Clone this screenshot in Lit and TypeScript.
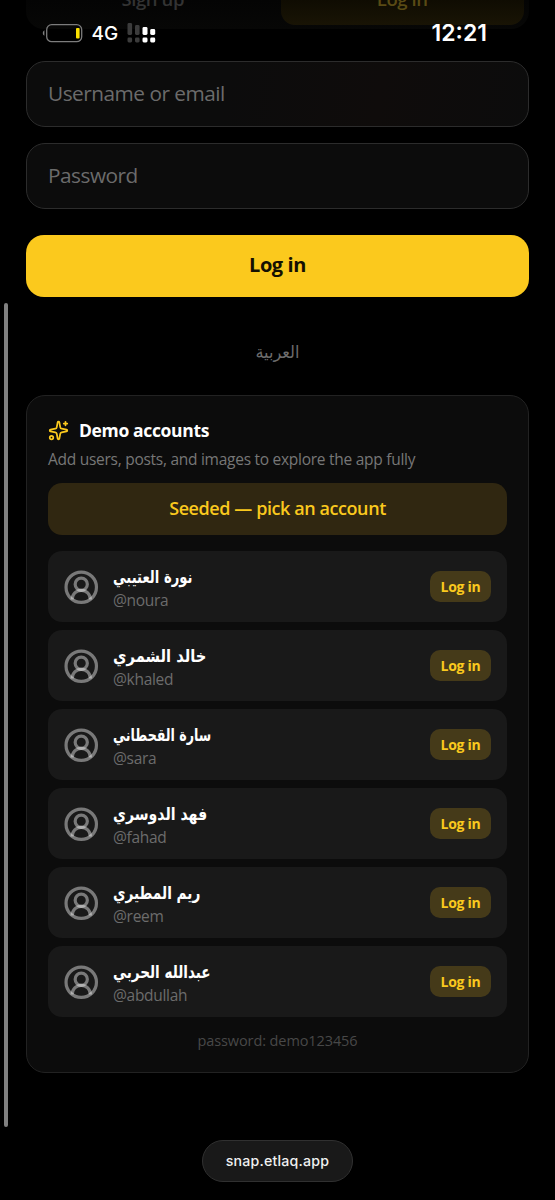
import { LitElement, html, css, svg } from "lit";
import { customElement, property } from "lit/decorators.js";

interface Account {
  name: string;
  handle: string;
  condense: number;
}

const ACCOUNTS: Account[] = [
  { name: "نورة العتيبي", handle: "@noura", condense: 0.752 },
  { name: "خالد الشمري", handle: "@khaled", condense: 0.842 },
  { name: "سارة القحطاني", handle: "@sara", condense: 0.723 },
  { name: "فهد الدوسري", handle: "@fahad", condense: 0.805 },
  { name: "ريم المطيري", handle: "@reem", condense: 0.78 },
  { name: "عبدالله الحربي", handle: "@abdullah", condense: 0.775 },
];

const userIcon = svg`
  <path d="M18 20a6 6 0 0 0-12 0" /><circle cx="12" cy="10" r="4" /><circle cx="12" cy="12" r="10" />`;

@customElement("account-row")
export class AccountRow extends LitElement {
  @property({ attribute: false }) account!: Account;

  static styles = css`
    :host {
      display: flex;
      align-items: center;
      height: 71px;
      box-sizing: border-box;
      padding: 0 16px 0 15.5px;
      border-radius: 14px;
      background: #191919;
      font-family: "Open Sans", "DejaVu Sans", sans-serif;
    }
    .avatar {
      width: 36.5px;
      height: 36.5px;
      flex: none;
      margin: 1px 0.5px 0 -0.5px;
      fill: none;
      stroke: rgba(255, 255, 255, 0.42);
      stroke-width: 2.1;
    }
    .who {
      flex: 1;
      margin-left: 13px;
      padding-top: 2px;
      display: flex;
      flex-direction: column;
      align-items: flex-start;
    }
    .name {
      font: 700 17.5px/24px "DejaVu Sans", sans-serif;
      color: #fff;
      white-space: nowrap;
      height: 24px;
      transform-origin: left center;
    }
    .handle {
      font-size: 15.5px;
      line-height: 22px;
      color: #6c6c6c;
      letter-spacing: -0.3px;
    }
    .go {
      width: 61px;
      height: 31px;
      border: 0;
      border-radius: 10px;
      padding: 0;
      background: #453a19;
      color: #fac91e;
      font: 700 14px/31px "Open Sans", sans-serif;
      letter-spacing: -0.3px;
    }
  `;

  render() {
    return html`
      <svg class="avatar" viewBox="0 0 24 24">${userIcon}</svg>
      <div class="who">
        <span class="name" dir="rtl" style="transform: scaleX(${this.account.condense})">${this.account.name}</span>
        <span class="handle">${this.account.handle}</span>
      </div>
      <button class="go">Log in</button>
    `;
  }
}

@customElement("app-root")
export class AppRoot extends LitElement {
  static styles = css`
    :host {
      display: block;
      position: relative;
      height: 1200px;
      overflow: hidden;
      background: #000;
      font-family: "Open Sans", "DejaVu Sans", sans-serif;
    }
    .page {
      display: flex;
      flex-direction: column;
      padding: 0 26px;
    }
    .tabs {
      height: 29px;
      box-sizing: border-box;
      padding: 0 5px 4px 5px;
      display: grid;
      grid-template-columns: 1fr 1fr;
      gap: 6px;
      align-items: end;
      background: linear-gradient(#040404, #070706);
      border-radius: 0 0 18px 18px;
      overflow: hidden;
    }
    .tab {
      height: 25px;
      border-radius: 0 0 14px 14px;
      text-align: center;
      font-size: 18.5px;
      line-height: 26px;
      font-weight: 600;
      color: #333;
      letter-spacing: -0.4px;
    }
    .tab span {
      display: block;
      margin-top: -14px;
    }
    .tab.on {
      background: linear-gradient(#0f0c02, #191405);
      color: #594a14;
    }
    .field {
      height: 66px;
      box-sizing: border-box;
      border: 1px solid #2c2c2c;
      border-radius: 19px;
      background: #0c0c0c;
      padding: 0 21px;
      color: #6b6b6b;
      font: 400 20.8px/62px "Open Sans", sans-serif;
      letter-spacing: -0.5px;
    }
    .user {
      margin-top: 32px;
      background: linear-gradient(100deg, #0c0c0c 40%, #0f0c0b 70%, #0c0c0c);
    }
    .pass {
      margin-top: 15.5px;
    }
    .submit {
      margin-top: 26px;
      height: 62px;
      border: 0;
      border-radius: 18px;
      background: #fbc91d;
      color: #141002;
      font: 700 20px/60px "Open Sans", sans-serif;
      letter-spacing: -0.4px;
      padding: 0 0 1px;
    }
    .lang {
      margin-top: 41px;
      height: 28px;
      text-align: center;
      font: 400 17.5px/28px "DejaVu Sans", sans-serif;
      color: #6c6c6c;
      transform: scaleX(0.92);
    }
    .card {
      margin-top: 29.5px;
      height: 678px;
      box-sizing: border-box;
      border: 1px solid #222;
      border-radius: 19px;
      background: #0c0c0c;
      padding: 21.5px 21px 0;
      display: flex;
      flex-direction: column;
    }
    .title {
      display: flex;
      align-items: center;
      gap: 10px;
      height: 25px;
      color: #fff;
      font-weight: 700;
      font-size: 17.5px;
      letter-spacing: -0.35px;
    }
    .spark {
      width: 21px;
      height: 21px;
      fill: none;
      stroke: #fac91e;
      stroke-width: 2;
      stroke-linecap: round;
      stroke-linejoin: round;
    }
    .desc {
      margin-top: 4px;
      height: 24px;
      font-size: 15.5px;
      line-height: 24px;
      color: #777;
      letter-spacing: -0.27px;
      white-space: nowrap;
    }
    .seeded {
      margin-top: 12.5px;
      height: 51.5px;
      line-height: 51px;
      border-radius: 14px;
      text-align: center;
      background: #302711;
      color: #fac91e;
      font-weight: 600;
      font-size: 18px;
      letter-spacing: -0.42px;
    }
    .rows {
      margin-top: 16.5px;
      display: flex;
      flex-direction: column;
      gap: 8.1px;
    }
    .hint {
      margin-top: 12px;
      height: 24px;
      line-height: 24px;
      text-align: center;
      font-size: 14.5px;
      letter-spacing: -0.1px;
      color: #484848;
    }
    .status {
      position: absolute;
      left: 41.5px;
      right: 68px;
      top: 19.5px;
      height: 27px;
      display: flex;
      align-items: center;
      color: #fff;
      font-family: Inter, sans-serif;
    }
    .battery {
      width: 41px;
      height: 20px;
    }
    .net {
      margin-left: 9px;
      font-size: 19px;
      font-weight: 500;
    }
    .signal {
      margin-left: 8.5px;
      width: 29px;
      height: 20px;
    }
    .time {
      margin-left: auto;
      font-size: 23px;
      font-weight: 600;
    }
    .scroll {
      position: absolute;
      left: 4px;
      top: 303px;
      width: 4px;
      height: 824px;
      border-radius: 2px;
      background: #808080;
    }
    .url {
      position: absolute;
      left: 202px;
      top: 1140px;
      width: 151px;
      height: 42px;
      box-sizing: border-box;
      border: 1px solid #303030;
      border-radius: 21px;
      background: #191919;
      color: #f0f0f0;
      text-align: center;
      font: 500 14.2px/40px Inter, sans-serif;
      letter-spacing: 0.2px;
    }
  `;

  render() {
    return html`
      <main class="page">
        <nav class="tabs">
          <div class="tab"><span>Sign up</span></div>
          <div class="tab on"><span>Log in</span></div>
        </nav>
        <div class="field user">Username or email</div>
        <div class="field pass">Password</div>
        <button class="submit">Log in</button>
        <div class="lang" dir="rtl">العربية</div>
        <section class="card">
          <div class="title">
            <svg class="spark" viewBox="0 0 24 24">
              <path d="M11.017 2.814a1 1 0 0 1 1.966 0l1.051 5.558a2 2 0 0 0 1.594 1.594l5.558 1.051a1 1 0 0 1 0 1.966l-5.558 1.051a2 2 0 0 0-1.594 1.594l-1.051 5.558a1 1 0 0 1-1.966 0l-1.051-5.558a2 2 0 0 0-1.594-1.594l-5.558-1.051a1 1 0 0 1 0-1.966l5.558-1.051a2 2 0 0 0 1.594-1.594z" />
              <path d="M20 2v4M22 4h-4" />
              <circle cx="4" cy="20" r="2" />
            </svg>
            <span>Demo accounts</span>
          </div>
          <div class="desc">Add users, posts, and images to explore the app fully</div>
          <div class="seeded">Seeded — pick an account</div>
          <div class="rows">
            ${ACCOUNTS.map((a) => html`<account-row .account=${a}></account-row>`)}
          </div>
          <div class="hint">password: demo123456</div>
        </section>
      </main>
      <div class="scroll"></div>
      <div class="status">
        <svg class="battery" viewBox="0 0 41 20">
          <rect x="4.7" y="1.7" width="35" height="17" rx="5" fill="none" stroke="#7c7c7c" stroke-width="1.3" />
          <path d="M2.4 7.2v5.6a3.2 3.2 0 0 1 0-5.6z" fill="#7c7c7c" />
          <rect x="34" y="5" width="3.6" height="10.4" rx="1" fill="#fbe000" />
        </svg>
        <span class="net">4G</span>
        <svg class="signal" viewBox="0 0 29 20">
          <g fill="#3c3c3c">
            <rect x="0.5" y="0" width="4.6" height="12" rx="1.4" />
            <rect x="8" y="2" width="4.6" height="10" rx="1.4" />
            <rect x="0.5" y="14.5" width="4.6" height="5" rx="1.4" />
            <rect x="8" y="14.5" width="4.6" height="5" rx="1.4" />
          </g>
          <g fill="#fff">
            <rect x="15.5" y="4" width="5" height="8" rx="1.4" />
            <rect x="23.2" y="6" width="5" height="6" rx="1.4" />
            <rect x="15.5" y="14.5" width="5" height="5" rx="1.4" />
            <rect x="23.2" y="14.5" width="5" height="5" rx="1.4" />
          </g>
        </svg>
        <span class="time">12:21</span>
      </div>
      <div class="url">snap.etlaq.app</div>
    `;
  }
}
